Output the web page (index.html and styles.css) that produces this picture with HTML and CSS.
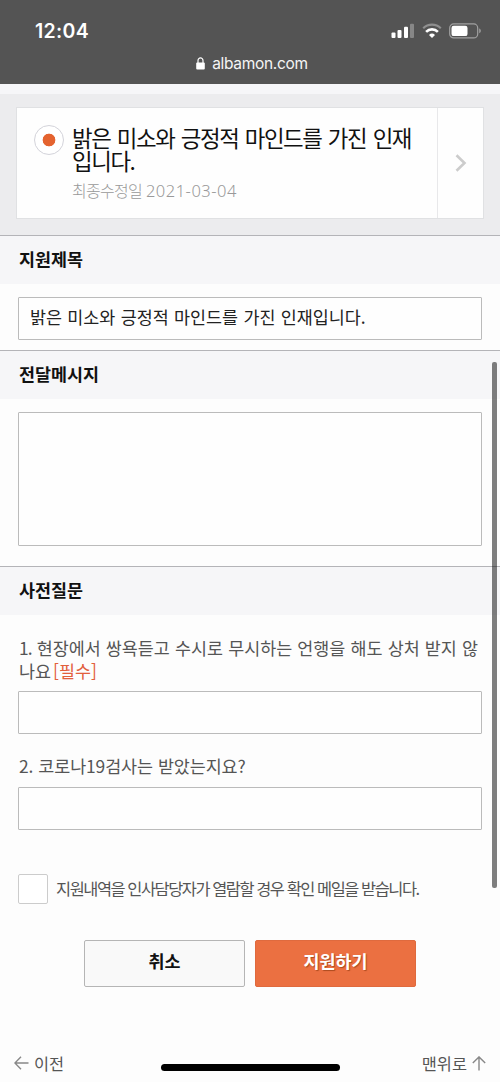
FILE: index.html
```html
<!DOCTYPE html>
<html lang="ko">
<head>
<meta charset="UTF-8">
<title>지원하기</title>
<link rel="stylesheet" href="styles.css">
</head>
<body>
  <header class="browser-bar">
    <div class="status">
      <span class="time">12:04</span>
      <div class="status-icons">
        <svg width="24" height="16" viewBox="0 0 24 16" fill="#fff">
          <rect x="0.5" y="9.5" width="4" height="5.5" rx="1"/>
          <rect x="6.5" y="7" width="4" height="8" rx="1"/>
          <rect x="13" y="3.8" width="4" height="11.2" rx="1"/>
          <rect x="19" y="0.8" width="4" height="14.2" rx="1" opacity="0.3"/>
        </svg>
        <svg width="20" height="16" viewBox="0 0 20 16" fill="none" stroke="#fff" stroke-width="2.6">
          <path d="M1.2 5.3A12.6 12.6 0 0 1 18.8 5.3" opacity="0.35" stroke-width="2.2"/>
          <path d="M4.1 8.8A8.3 8.3 0 0 1 15.9 8.8"/>
          <path d="M10 15L7 12A4.3 4.3 0 0 1 13 12Z" fill="#fff" stroke="none"/>
        </svg>
        <svg width="33" height="16" viewBox="0 0 33 16">
          <rect x="0.7" y="0.9" width="28" height="14" rx="4" fill="none" stroke="#fff" stroke-opacity="0.45" stroke-width="1.2"/>
          <rect x="2.5" y="2.7" width="16" height="10.4" rx="2.2" fill="#fff"/>
          <path d="M30.3 5.5C32.2 6.2 32.2 9.4 30.3 10.2Z" fill="#fff" opacity="0.5"/>
        </svg>
      </div>
    </div>
    <div class="address">
      <svg width="9" height="13" viewBox="0 0 9 13">
        <path d="M2 6V3.6C2 0 7 0 7 3.6V6" fill="none" stroke="#fff" stroke-width="1.2"/>
        <rect x="0.2" y="5.4" width="8.6" height="7.2" rx="1" fill="#fff"/>
      </svg>
      <span>albamon.com</span>
    </div>
  </header>

  <main>
    <section class="resume">
      <div class="resume-card">
        <span class="radio"></span>
        <div class="resume-text">
          <p class="resume-title">밝은 미소와 긍정적 마인드를 가진 인재<br>입니다.</p>
          <p class="resume-date">최종수정일 <span class="num">2021-03-04</span></p>
        </div>
        <div class="resume-more">
          <svg width="12" height="18" viewBox="0 0 12 18" fill="none" stroke="#ccc" stroke-width="2.6">
            <path d="M1.5 1.2L9.5 9L1.5 16.8"/>
          </svg>
        </div>
      </div>
    </section>

    <section>
      <h2>지원제목</h2>
      <div class="field-area">
        <div class="field">밝은 미소와 긍정적 마인드를 가진 인재입니다.</div>
      </div>
    </section>

    <section>
      <h2>전달메시지</h2>
      <div class="field-area message">
        <div class="field"></div>
      </div>
    </section>

    <section>
      <h2>사전질문</h2>
      <div class="questions">
        <p class="question"><span class="first-num">1.</span> 현장에서 쌍욕듣고 수시로 무시하는 언행을 해도 상처 받지 않<br>나요<span class="required">[필수]</span></p>
        <div class="field"></div>
        <p class="question second">2. 코로나19검사는 받았는지요?</p>
        <div class="field"></div>
        <div class="agree">
          <span class="checkbox"></span>
          <span class="agree-text">지원내역을 인사담당자가 열람할 경우 확인 메일을 받습니다.</span>
        </div>
        <div class="buttons">
          <button class="cancel">취소</button>
          <button class="submit">지원하기</button>
        </div>
      </div>
    </section>
  </main>

  <footer>
    <a class="foot-link">
      <svg width="15" height="14" viewBox="0 0 15 14" fill="none" stroke="#888" stroke-width="1.4">
        <path d="M14.5 7H1M7 0.8L0.9 7L7 13.2"/>
      </svg>
      <span>이전</span>
    </a>
    <a class="foot-link">
      <span>맨위로</span>
      <svg width="14" height="15" viewBox="0 0 14 15" fill="none" stroke="#888" stroke-width="1.4">
        <path d="M7 14.5V1M0.8 7L7 0.9L13.2 7"/>
      </svg>
    </a>
  </footer>

  <div class="scrollbar"></div>
  <div class="home-bar"></div>
</body>
</html>
```
FILE: styles.css
```css
* {
  box-sizing: border-box;
}

body {
  margin: 0;
  width: 500px;
  height: 1082px;
  overflow: hidden;
  display: flex;
  flex-direction: column;
  background: #fdfdfd;
  color: #222;
  font-family: "Noto Sans CJK KR", sans-serif;
  font-size: 17.4px;
  position: relative;
}

h2, p {
  margin: 0;
}

.browser-bar {
  height: 84px;
  flex: none;
  background: #545454;
  color: #fff;
  font-family: Inter, sans-serif;
}

.status {
  height: 46px;
  padding: 16px 18px 0 35px;
  display: flex;
  justify-content: space-between;
}

.time {
  font-size: 19.5px;
  font-weight: 600;
  line-height: 30px;
  letter-spacing: 0.3px;
}

.status-icons {
  display: flex;
  gap: 7px;
  padding-top: 7px;
}

.address {
  display: flex;
  justify-content: center;
  align-items: center;
  gap: 7px;
  height: 34px;
  padding-left: 4px;
  font-size: 15.5px;
  letter-spacing: -0.3px;
  color: #f4f4f4;
}

.resume {
  height: 151px;
  padding: 13px 16px 0;
  background: #ececee;
  border-top: 10px solid #f6f6f8;
}

.resume-card {
  height: 112px;
  display: flex;
  background: #fefefe;
  border: 1px solid #e0e1e3;
}

.radio {
  width: 30px;
  height: 30px;
  flex: none;
  margin: 17px 0 0 17px;
  border: 1.5px solid #d3d3da;
  border-radius: 50%;
  background: radial-gradient(circle, #e4632f 6px, #fff 6.7px);
}

.resume-text {
  flex: 1;
  padding: 18px 0 0 8px;
  white-space: nowrap;
}

.resume-title {
  color: #111;
  font-size: 22.4px;
  line-height: 23px;
  letter-spacing: -1.4px;
  word-spacing: 1.5px;
}

.resume-date {
  margin-top: 7px;
  font-size: 16px;
  line-height: 22px;
  letter-spacing: -0.7px;
  font-weight: 300;
  color: #999;
}

.num {
  font-family: "Noto Sans", sans-serif;
  font-size: 16.5px;
  letter-spacing: 0.5px;
}

.resume-more {
  width: 46px;
  flex: none;
  display: flex;
  align-items: center;
  justify-content: center;
  border-left: 1px solid #e8e8ea;
}

h2 {
  height: 49px;
  padding: 0 19px;
  border-top: 1px solid #b4b4b8;
  background: #f6f6f8;
  color: #111;
  font-size: 17.4px;
  font-weight: 700;
  line-height: 45px;
}

.field-area {
  height: 66px;
  padding: 13px 18px 0;
}

.field {
  height: 43px;
  padding: 0 11px;
  border: 1px solid #bbb;
  border-radius: 1px;
  background: #fefefe;
  line-height: 38px;
  white-space: nowrap;
  word-spacing: 0.5px;
}

.message {
  height: 167px;
}

.message .field {
  height: 134px;
}

.questions {
  padding: 22px 18px 0;
}

.question {
  padding-left: 1px;
  margin-bottom: 9px;
  color: #555;
  line-height: 22.5px;
  word-spacing: 0.3px;
  white-space: nowrap;
}

.first-num {
  letter-spacing: -1px;
}

.second {
  margin: 21px 0 9px;
  letter-spacing: -0.1px;
}

.required {
  margin-left: 2px;
  color: #e2603c;
}

.agree {
  display: flex;
  align-items: center;
  gap: 8px;
  height: 30px;
  margin-top: 44px;
}

.checkbox {
  width: 30px;
  height: 30px;
  border: 1px solid #ccc;
  border-radius: 2px;
  background: #fff;
}

.agree-text {
  padding-bottom: 2px;
  font-size: 16.4px;
  letter-spacing: -1.45px;
  color: #555;
  white-space: nowrap;
}

.buttons {
  display: flex;
  justify-content: center;
  gap: 10px;
  margin-top: 36px;
}

button {
  width: 161px;
  height: 47px;
  padding: 0 0 5px;
  border: 1px solid #b5b5b5;
  border-radius: 2px;
  font-family: inherit;
  font-size: 17.4px;
  font-weight: 700;
}

.cancel {
  background: #f9f9f9;
  color: #111;
}

.submit {
  background: #eb7041;
  border-color: #df6a3e;
  color: #fff;
  text-shadow: 1px 1px 1px rgba(130, 50, 10, 0.6);
}

footer {
  margin-top: auto;
  height: 36px;
  padding: 0 14px;
  display: flex;
  justify-content: space-between;
}

.foot-link {
  display: flex;
  align-items: center;
  gap: 5px;
  height: 34px;
  font-size: 16.4px;
  color: #555;
}

.scrollbar {
  position: absolute;
  left: 492px;
  top: 362px;
  width: 5px;
  height: 526px;
  border-radius: 2px;
  background: rgba(0, 0, 0, 0.5);
}

.home-bar {
  position: absolute;
  left: 161px;
  bottom: 11px;
  width: 179px;
  height: 7px;
  border-radius: 4px;
  background: #000;
}
```
